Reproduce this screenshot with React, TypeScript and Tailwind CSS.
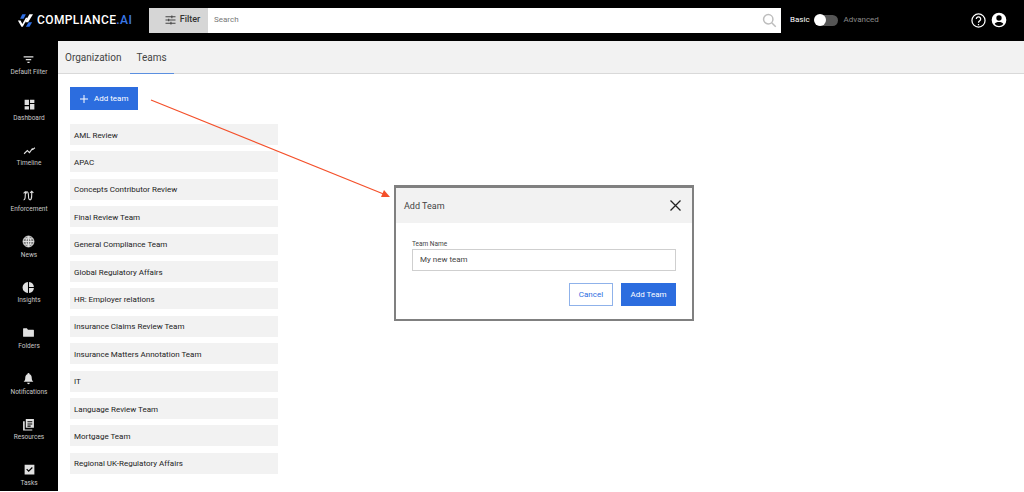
import React from "react";

const F = "[font-family:'Roboto','Liberation_Sans',sans-serif]";

const teams = [
  "AML Review",
  "APAC",
  "Concepts Contributor Review",
  "Final Review Team",
  "General Compliance Team",
  "Global Regulatory Affairs",
  "HR: Employer relations",
  "Insurance Claims Review Team",
  "Insurance Matters Annotation Team",
  "IT",
  "Language Review Team",
  "Mortgage Team",
  "Regional UK-Regulatory Affairs",
];

const s = { width: 13, height: 13, viewBox: "0 0 24 24", fill: "#e0e0e0" };
const nav: [string, React.ReactNode][] = [
  ["Default Filter", <svg {...s}><path d="M3 6h18v2.4H3zM7 11h10v2.4H7zM10 16h4v2.4h-4z" /></svg>],
  ["Dashboard", <svg {...s}><path d="M3 3h8v10H3zM13 3h8v6h-8zM13 11h8v10h-8zM3 15h8v6H3z" /></svg>],
  ["Timeline", <svg {...s} fill="none" stroke="#e0e0e0" strokeWidth="2"><path d="M2 18l6-6 4 4 5-7 1 1 4-3" /></svg>],
  ["Enforcement", <svg {...s} fill="none" stroke="#e0e0e0" strokeWidth="2"><path d="M3 20c3 0 3-3 3-8s1-7 3-7 3 3 3 8 0 7 3 7 3-4 3-15M15 7l3-3 3 3M3 8l3-3 3 3" /></svg>],
  ["News", <svg {...s} fill="none" stroke="#e0e0e0" strokeWidth="1.800"><circle cx="12" cy="12" r="10" fill="#777" /><path d="M2 12h20M12 2v20M4 7h16M4 17h16M12 2c-6 6-6 14 0 20M12 2c6 6 6 14 0 20" /></svg>],
  ["Insights", <svg {...s}><path d="M11 2v20a10 10 0 0 1 0-20zM13 2a10 10 0 0 1 9 9h-9zM13 13h9a10 10 0 0 1-9 9z" /></svg>],
  ["Folders", <svg {...s}><path d="M2 5a1 1 0 0 1 1-1h6l2 3h10a1 1 0 0 1 1 1v11a1 1 0 0 1-1 1H3a1 1 0 0 1-1-1z" /></svg>],
  ["Notifications", <svg {...s}><path d="M12 2a2 2 0 0 1 2 2c3 1 4 4 4 7 0 4 1 5 3 7H3c2-2 3-3 3-7 0-3 1-6 4-7a2 2 0 0 1 2-2zM9.5 20h5a2.5 2.5 0 0 1-5 0z" /></svg>],
  ["Resources", <svg {...s}><path d="M7 2h15v16H7zM10 6v2h9V6zM10 10v2h9v-2zM10 14v2h6v-2z" fillRule="evenodd" /><path d="M2 6h3v15h14v2H2z" /></svg>],
  ["Tasks", <svg {...s}><path fillRule="evenodd" d="M3 3h18v18H3zM6 12l1.5-1.5 3 3 6-6L18 9l-7.500 7.500z" /></svg>],
];

export default function App() {
  return (
    <div className={`${F} relative w-[1024px] h-[492px] overflow-hidden bg-white flex flex-col`}>
      <header className="h-[41px] bg-black flex items-center shrink-0 pb-[1px]">
        <div className="w-[149px] pl-[17px] flex items-center gap-[4px]">
          <svg width="16" height="15" viewBox="0 0 18 16">
            <path d="M6 1h4L7.500 6h-4z" fill="#2f6fe4" />
            <path d="M14 1h4l-5.500 9H9z" fill="#ffffff" />
            <path d="M13 10h4l-3 5h-4z" fill="#2f6fe4" />
            <path d="M1 8h3l2 4 4-7h2L6.500 15H5z" fill="#ffffff" />
          </svg>
          <span className="text-[12px] font-medium tracking-[0.4px] text-white leading-none">
            COMPLIANCE<span className="text-[#3b78e7]">.AI</span>
          </span>
        </div>
        <div className="w-[632px] h-[25px] flex bg-white">
          <div className="w-[59px] bg-[#d6d6d6] flex items-center justify-center gap-[4px] pl-[8px] text-[#333] text-[9px] font-medium">
            <svg width="11" height="10" viewBox="0 0 24 22" stroke="#444" strokeWidth="2.400" fill="none">
              <path d="M1 4h22M1 11h22M1 18h22M15 1v6M8 8v6M13 15v6" />
            </svg>
            Filter
          </div>
          <div className="flex-1 flex items-center justify-between pl-[6px] pr-[4px] text-[8px] text-[#777]">
            <span>Search</span>
            <svg width="15" height="15" viewBox="0 0 24 24" fill="none" stroke="#bdbdbd" strokeWidth="2.400">
              <circle cx="10" cy="10" r="7.500" />
              <path d="M15.500 15.500L22 22" />
            </svg>
          </div>
        </div>
        <div className="ml-[9px] flex items-center text-[8px]">
          <span className="text-white">Basic</span>
          <div className="ml-[5px] w-[23px] h-[11px] rounded-full bg-[#555] relative">
            <div className="absolute -left-[1px] -top-[0.500px] w-[12px] h-[12px] rounded-full bg-white" />
          </div>
          <span className="ml-[6px] text-[#8a8a8a]">Advanced</span>
        </div>
        <div className="ml-auto mr-[17px] flex items-center gap-[5px]">
          <svg width="15" height="15" viewBox="0 0 24 24" fill="none" stroke="#fff" strokeWidth="2">
            <circle cx="12" cy="12" r="10.500" />
            <path d="M8.500 9.500a3.500 3.500 0 1 1 5.500 3c-1.500 1-2 1.500-2 3M12 17.500v2" />
          </svg>
          <svg width="16" height="16" viewBox="0 0 24 24" fill="#fff">
            <path fillRule="evenodd" d="M12 1a11 11 0 1 1 0 22 11 11 0 0 1 0-22zm0 4a4 4 0 1 0 0 8 4 4 0 0 0 0-8zm0 10c-3 0-5.500 1-6.500 3a8.500 8.500 0 0 0 13 0c-1-2-3.500-3-6.500-3z" />
          </svg>
        </div>
      </header>

      <div className="flex-1 flex min-h-0">
        <aside className="w-[58px] bg-black shrink-0 flex flex-col items-center pt-[11px] mb-[1px] overflow-hidden">
          {nav.map(([label, icon]) => (
            <div key={label} className="h-[45.670px] shrink-0 flex flex-col items-center">
              <div className="h-[14px] flex items-center">{icon}</div>
              <div className="mt-[2px] text-[6.500px] leading-[9px] text-[#c8c8c8] whitespace-nowrap">{label}</div>
            </div>
          ))}
        </aside>

        <main className="flex-1 flex flex-col">
          <div className="h-[33px] bg-[#f2f2f2] border-b border-[#d9d9d9] flex pl-[7px] text-[10px] text-[#444] gap-[15px] shrink-0">
            <div className="pt-[9px]">Organization</div>
            <div className="relative pt-[9px] px-[7px] -mx-[7px]">
              Teams
              <div className="absolute left-0 right-0 -bottom-[1px] h-[1px] bg-[#5b8fe0]" />
            </div>
          </div>
          <div className="pl-[12px] pt-[13px]">
            <button className="w-[68px] h-[23px] bg-[#2c6ddf] text-white text-[8px] flex items-center pl-[10px] gap-[6px]">
              <svg width="8" height="8" viewBox="0 0 8 8" stroke="#fff" strokeWidth="1">
                <path d="M4 0v8M0 4h8" />
              </svg>
              Add team
            </button>
            <div className="mt-[14px] w-[208px] flex flex-col gap-[6.420px]">
              {teams.map((t) => (
                <div key={t} className="h-[21px] bg-[#f2f2f2] flex items-center pl-[4px] text-[8px] text-[#222] pt-[2px]">
                  {t}
                </div>
              ))}
            </div>
          </div>
        </main>
      </div>

      <svg className="absolute left-[150px] top-[98px]" width="240" height="100" viewBox="0 0 240 100">
        <path d="M1 2L236 97" stroke="#f4502a" strokeWidth="1.200" fill="none" />
        <path d="M240 99L231 99L234 92z" fill="#f4502a" />
      </svg>

      <div className="absolute left-[394px] top-[185px] w-[300px] h-[136px] bg-white border-2 border-[#808080] border-t-[3px] flex flex-col">
        <div className="h-[35px] bg-[#f2f2f2] flex items-center justify-between pl-[8px] pr-[11px] text-[9px] text-[#444]">
          <span className="pt-[2px]">Add Team</span>
          <svg width="11" height="11" viewBox="0 0 11 11" stroke="#222" strokeWidth="1.300">
            <path d="M0.500 0.500l10 10M10.500 0.500l-10 10" />
          </svg>
        </div>
        <div className="px-[16px] pt-[17px]">
          <div className="text-[6.500px] leading-[8px] text-[#444]">Team Name</div>
          <div className="mt-[1px] h-[22px] border border-[#cfcfcf] flex items-center pl-[7px] text-[8px] text-[#444]">My new team</div>
          <div className="mt-[12px] flex justify-end gap-[8px] text-[8px]">
            <div className="w-[44px] h-[23px] border border-[#8fb2ea] text-[#2c6ddf] flex items-center justify-center">Cancel</div>
            <div className="w-[55px] h-[23px] bg-[#2c6ddf] text-white flex items-center justify-center">Add Team</div>
          </div>
        </div>
      </div>
    </div>
  );
}
